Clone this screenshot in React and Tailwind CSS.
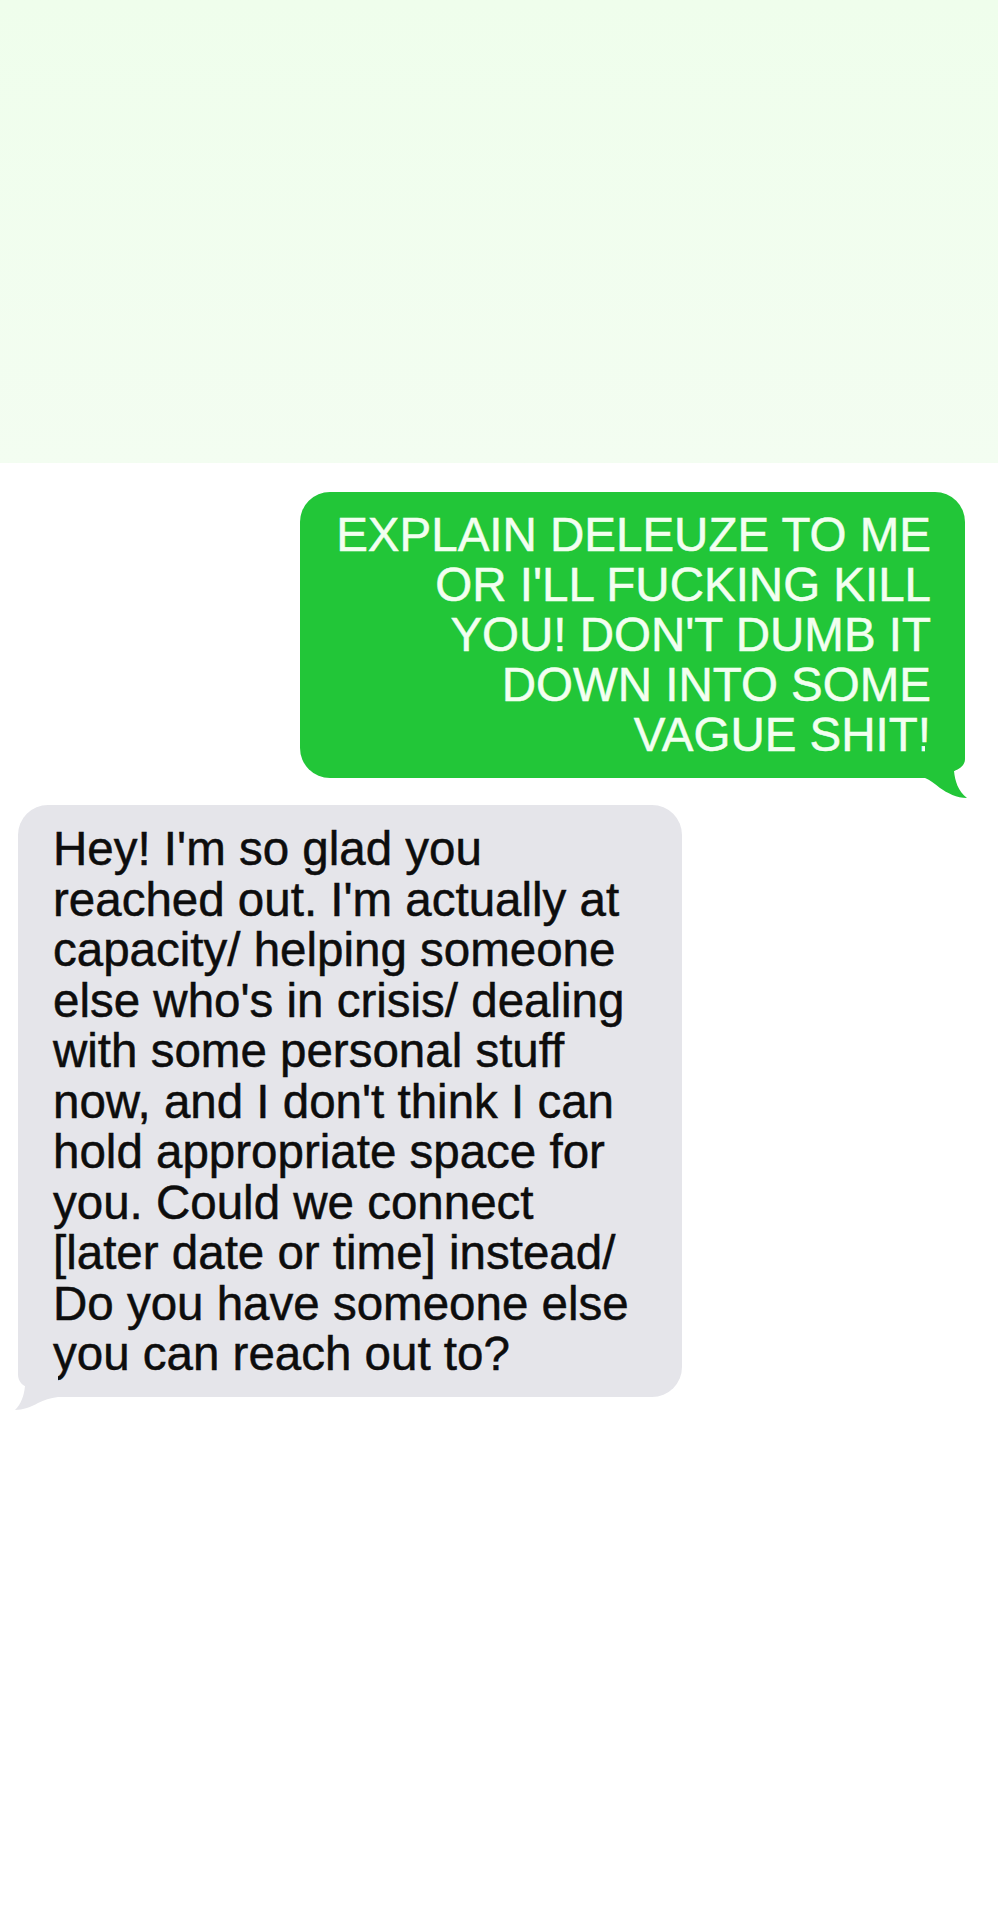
import React from "react";

const greenLines = [
  "EXPLAIN DELEUZE TO ME",
  "OR I'LL FUCKING KILL",
  "YOU! DON'T DUMB IT",
  "DOWN INTO SOME",
  "VAGUE SHIT!",
];

const grayLines = [
  "Hey! I'm so glad you",
  "reached out. I'm actually at",
  "capacity/ helping someone",
  "else who's in crisis/ dealing",
  "with some personal stuff",
  "now, and I don't think I can",
  "hold appropriate space for",
  "you. Could we connect",
  "[later date or time] instead/",
  "Do you have someone else",
  "you can reach out to?",
];

function Tail({ color, className, d }) {
  return (
    <svg
      className={className}
      width="50"
      height="60"
      viewBox="0 0 50 60"
      aria-hidden="true"
    >
      <path d={d} fill={color} />
    </svg>
  );
}

export default function App() {
  return (
    <div
      className="w-[998px] min-h-[1920px] bg-white"
      style={{ fontFamily: '"Liberation Sans", Arial, Helvetica, sans-serif' }}
    >
      <div className="h-[463px] bg-gradient-to-b from-[#effeec] to-[#f3fdf1]" />

      <div className="flex flex-col">
        <div className="relative ml-auto mr-[33px] mt-[29px] w-[665px] rounded-[30px] bg-[#22c638] pt-[18px] pb-[18px] pr-[34px] text-right text-[47.5px] leading-[50px] text-[#f2fff0] [-webkit-text-stroke:0.5px_#f2fff0]">
          {greenLines.map((l) => (
            <div key={l} className="whitespace-nowrap">
              {l}
            </div>
          ))}
          <Tail
            color="#22c638"
            d="M0 0 L40 0 L40 14 C40 20 35 24 29 26 C30 36 33 46 42 53 C32 53 22 48 15 43 C10 39 5 35 0 33 Z"
            className="absolute right-[-10px] bottom-[-27px]"
          />
        </div>

        <div className="relative ml-[18px] mt-[27px] w-[664px] rounded-[30px] bg-[#e5e5ea] pt-[19px] pb-[17.5px] pl-[35px] text-[47.5px] leading-[50.5px] text-[#0d0d0d] [-webkit-text-stroke:0.5px_#0d0d0d]">
          {grayLines.map((l) => (
            <div key={l} className="whitespace-nowrap">
              {l}
            </div>
          ))}
          <Tail
            color="#e5e5ea"
            d="M0 0 L40 0 L40 10 C40 16 37 20 33 22 C34 32 37 40 43 46 C35 46 27 43 20 39 C14 36 8 34 0 33 Z"
            className="absolute left-[-10px] bottom-[-27px] -scale-x-100"
          />
        </div>
      </div>
    </div>
  );
}
